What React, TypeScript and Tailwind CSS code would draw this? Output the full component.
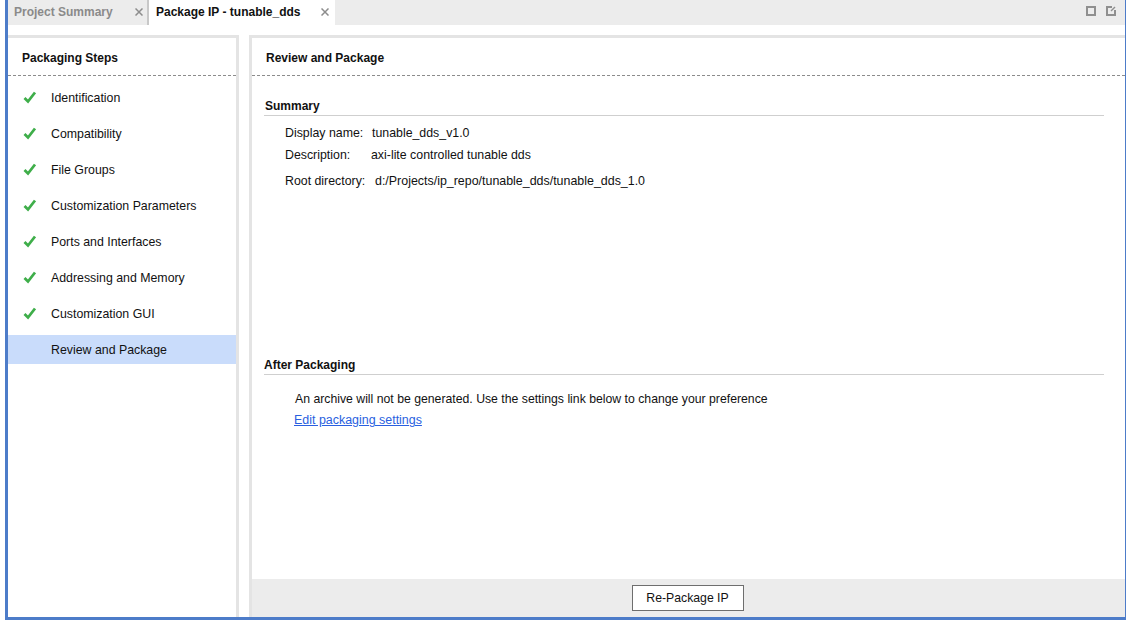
const steps = [
  "Identification",
  "Compatibility",
  "File Groups",
  "Customization Parameters",
  "Ports and Interfaces",
  "Addressing and Memory",
  "Customization GUI",
];

function CloseIcon() {
  return (
    <svg width="8" height="8" viewBox="0 0 8 8" fill="none">
      <path d="M0.5 0.5L7.5 7.5M7.5 0.5L0.5 7.5" stroke="#8c8c8c" strokeWidth="1.5" />
    </svg>
  );
}

function StepRow({ label, done, active }: { label: string; done?: boolean; active?: boolean }) {
  return (
    <div className={`flex items-center h-[29px] mb-[7px] pl-[15px] ${active ? "bg-[#c9dcfb]" : ""}`}>
      <span className="w-[28px] flex items-center">
        {done && (
          <svg width="14" height="13" viewBox="0 0 14 13" fill="none">
            <path d="M1.5 7L5 10.5L12 1.5" stroke="#3fae4a" strokeWidth="2.8" />
          </svg>
        )}
      </span>
      <span className="pt-[2px]">{label}</span>
    </div>
  );
}

export default function App() {
  return (
    <div className="h-[622px] w-[1126px] bg-white text-[12.35px] text-[#111] font-['Liberation_Sans',Arial,sans-serif] leading-none overflow-hidden">
      <div className="h-[620px] ml-[5px] border-l-[3px] border-r border-b-[3px] border-[#4d7cc9] flex flex-col">
        {/* tab bar */}
        <div className="h-[25px] shrink-0 bg-[#ececec] flex items-center text-[12px]">
          <div className="w-[141px] h-full flex items-center pl-[6px] pb-[2px] font-bold text-[#8a8a8a] border-r-2 border-[#c8c8c8]">
            <span className="w-[121px]">Project Summary</span>
            <CloseIcon />
          </div>
          <div className="w-[186px] h-full flex items-center pl-[7px] pb-[2px] font-bold bg-white">
            <span className="w-[165px]">Package IP - tunable_dds</span>
            <CloseIcon />
          </div>
          <div className="ml-auto flex items-center gap-[10px] pr-[9px] pb-[3px]">
            <div className="w-[10px] h-[10px] border-2 border-[#8f8f8f]" />
            <svg width="10" height="10" viewBox="0 0 10 10" fill="none">
              <path d="M6 1H1V9H9V4" stroke="#8f8f8f" strokeWidth="2" />
              <path d="M5 5L9 1" stroke="#8f8f8f" strokeWidth="1.5" />
            </svg>
          </div>
        </div>

        <div className="flex-1 flex pt-[10px] min-h-0">
          {/* left panel */}
          <div className="w-[231px] border-t-[3px] border-r-[3px] border-[#e4e4e4] flex flex-col">
            <div className="h-[38px] shrink-0 flex items-center pl-[14px] pt-[3px] text-[12px] font-bold border-b border-dashed border-[#8c8c8c]">
              Packaging Steps
            </div>
            <div className="pt-[7px]">
              {steps.map((s) => (
                <StepRow key={s} label={s} done />
              ))}
              <StepRow label="Review and Package" active />
            </div>
          </div>

          {/* right panel */}
          <div className="flex-1 ml-[10px] border-t-[3px] border-l-[3px] border-[#e4e4e4] flex flex-col">
            <div className="h-[38px] shrink-0 flex items-center pl-[14px] pt-[3px] text-[12px] font-bold border-b border-dashed border-[#8c8c8c]">
              Review and Package
            </div>
            <div className="flex-1 pl-[12px] pr-[21px] min-h-0">
              <div className="h-[40px] flex items-end text-[12px] font-bold border-b border-[#cfcfcf] pb-[3px] pl-px">Summary</div>
              <div className="pl-[21px] pt-[11px]">
                <div className="flex h-[22px] items-start">
                  <span className="w-[87px]">Display name:</span>
                  <span>tunable_dds_v1.0</span>
                </div>
                <div className="flex h-[26px] items-start">
                  <span className="w-[86px]">Description:</span>
                  <span>axi-lite controlled tunable dds</span>
                </div>
                <div className="flex items-start">
                  <span className="w-[90px]">Root directory:</span>
                  <span className="text-[12.43px]">d:/Projects/ip_repo/tunable_dds/tunable_dds_1.0</span>
                </div>
              </div>
              <div className="mt-[168px] h-[20px] flex items-end text-[12px] font-bold border-b border-[#cfcfcf] pb-[3px]">After Packaging</div>
              <div className="pl-[31px] pt-[18px]">
                <div className="h-[21px] text-[12.25px]">An archive will not be generated. Use the settings link below to change your preference</div>
                <a href="#" className="text-[12.45px] text-[#2a5fe0] underline -ml-px">Edit packaging settings</a>
              </div>
            </div>
            <div className="h-[38px] shrink-0 bg-[#ececec] flex justify-center items-start pt-[6px] pr-[2px]">
              <button className="w-[112px] h-[26px] bg-white border border-[#6e6e6e] flex items-center justify-center text-[12.25px]">Re-Package IP</button>
            </div>
          </div>
        </div>
      </div>
    </div>
  );
}
